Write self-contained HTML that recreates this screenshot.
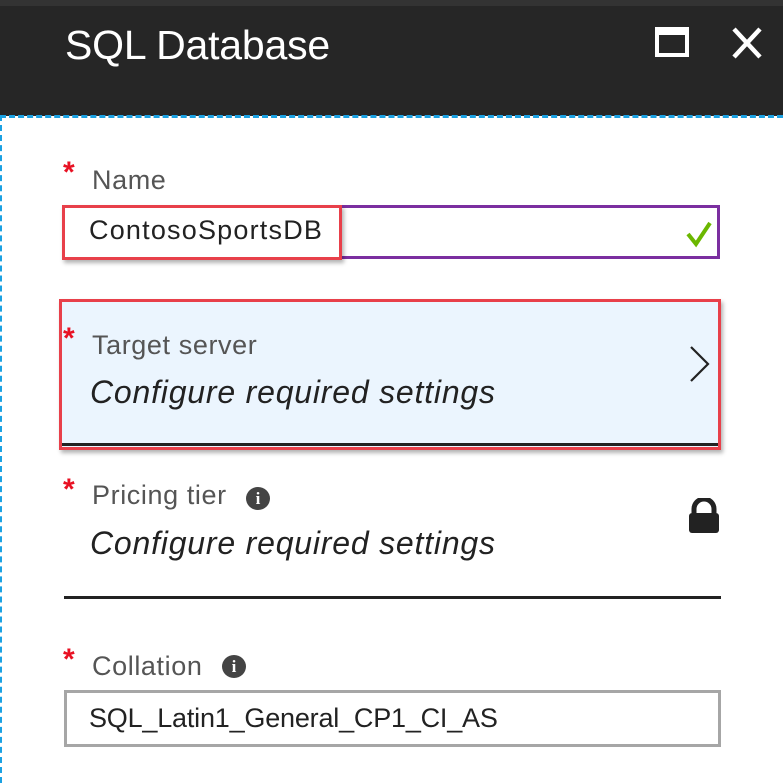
<!DOCTYPE html>
<html><head><style>
*{margin:0;padding:0;box-sizing:border-box}
body{width:783px;height:783px;background:#fff;position:relative;overflow:hidden;font-family:"Liberation Sans",sans-serif}
.a{position:absolute;white-space:nowrap}
.hdr{left:0;top:0;width:783px;height:116px;background:#262626;border-top:6px solid #333}
.title{left:65px;top:22px;color:#fff;font-size:41px;font-weight:300;letter-spacing:-0.2px}
.dash{left:0;top:115px;width:783px;height:3px;border-top:3px dashed #1ba1e2}
.dashl{left:0;top:115px;width:3px;height:668px;border-left:2px dashed #1ba1e2}
.star{color:#e81123;font-size:30px;font-weight:bold}
.lbl{color:#555;font-size:27px;letter-spacing:0.6px}
.it{color:#222;font-size:32px;font-style:italic;letter-spacing:0.8px}
.info{width:24px;height:23px;border-radius:50%;background:#444;color:#fff;font-size:17px;font-weight:bold;text-align:center;line-height:23px;font-family:"Liberation Serif",serif}
</style></head><body>
<div class="a hdr"></div>
<div class="a title">SQL Database</div>
<div class="a" style="left:655px;top:27px;width:34px;height:30px;border:4px solid #fff;border-top-width:8px"></div>
<svg class="a" style="left:731px;top:27px" width="32" height="32"><path d="M3 2L29 30M29 2L3 30" stroke="#fff" stroke-width="4.5"/></svg>
<div class="a dash"></div>
<div class="a dashl"></div>

<div class="a star" style="left:63px;top:156px">*</div>
<div class="a lbl" style="left:92px;top:165px">Name</div>
<div class="a" style="left:64px;top:205px;width:656px;height:54px;border:3px solid #7b2fa0"></div>
<div class="a" style="left:62px;top:205px;width:280px;height:55px;border:3px solid #e8404a;background:#fff;box-shadow:2px 3px 4px rgba(0,0,0,0.3)"></div>
<div class="a" style="left:89px;top:215px;font-size:27px;color:#222;letter-spacing:1.2px">ContosoSportsDB</div>
<svg class="a" style="left:685px;top:220px" width="28" height="28"><path d="M3 14L11 24L25 3" fill="none" stroke="#6bb700" stroke-width="4"/></svg>

<div class="a" style="left:59px;top:299px;width:662px;height:151px;border:3px solid #e8404a;background:#ebf5fe;box-shadow:2px 3px 4px rgba(0,0,0,0.3)"></div>
<div class="a" style="left:62px;top:443px;width:656px;height:3px;background:#222"></div>
<div class="a star" style="left:63px;top:322px">*</div>
<div class="a lbl" style="left:92px;top:330px">Target server</div>
<div class="a it" style="left:90px;top:374px">Configure required settings</div>
<svg class="a" style="left:688px;top:345px" width="24" height="38"><path d="M3 2L20 19L3 36" fill="none" stroke="#222" stroke-width="2.2"/></svg>

<div class="a star" style="left:63px;top:473px">*</div>
<div class="a lbl" style="left:92px;top:480px">Pricing tier</div>
<div class="a info" style="left:246px;top:487px">i</div>
<svg class="a" style="left:686px;top:498px" width="36" height="36"><path d="M8 15V11A8 8 0 0 1 28 11V15" fill="none" stroke="#222" stroke-width="5"/><rect x="3" y="15" width="30" height="20" rx="3" fill="#222"/></svg>
<div class="a it" style="left:90px;top:525px">Configure required settings</div>
<div class="a" style="left:64px;top:596px;width:657px;height:3px;background:#222"></div>

<div class="a star" style="left:63px;top:643px">*</div>
<div class="a lbl" style="left:92px;top:651px">Collation</div>
<div class="a info" style="left:222px;top:655px">i</div>
<div class="a" style="left:64px;top:690px;width:657px;height:57px;border:3px solid #a6a6a6"></div>
<div class="a" style="left:89px;top:703px;font-size:27px;color:#222;letter-spacing:-0.2px">SQL_Latin1_General_CP1_CI_AS</div>
</body></html>
